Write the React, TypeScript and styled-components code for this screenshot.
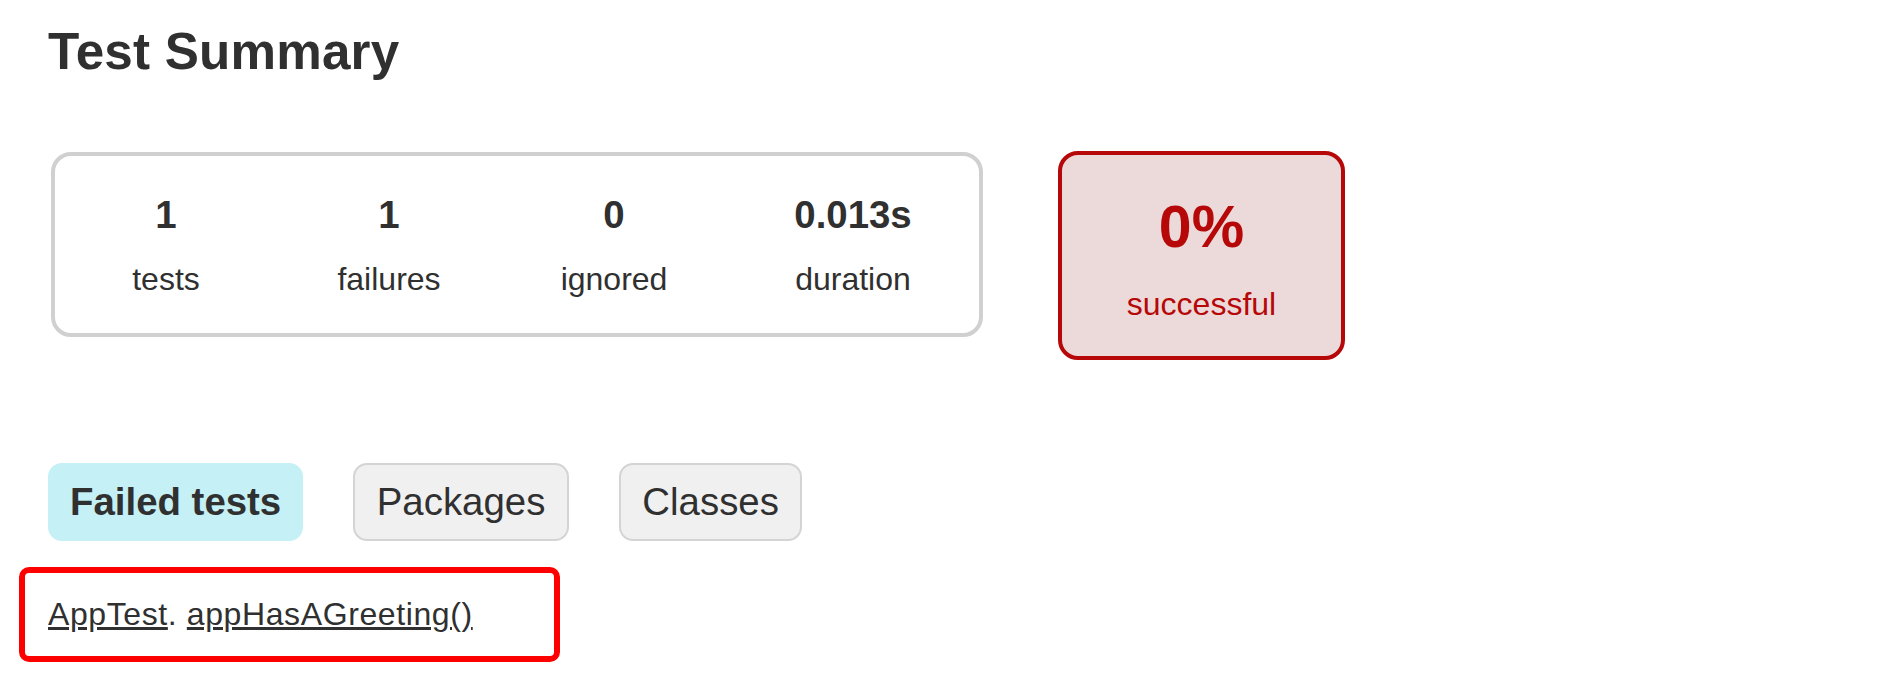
import styled, { createGlobalStyle } from "styled-components";

const GlobalStyle = createGlobalStyle`
    html, body {
        margin: 0;
        padding: 0;
        background: #ffffff;
    }
    body {
        font-family: "Liberation Sans", Arial, Helvetica, sans-serif;
        font-size: 32px;
        color: #303030;
    }
`;

const Content = styled.div`
    padding: 22px 48px 0 48px;
`;

const Title = styled.h1`
    margin: 0;
    font-size: 51.2px;
    line-height: 60px;
    font-weight: bold;
    color: #303030;
    letter-spacing: 0.2px;
`;

const SummaryRow = styled.div`
    display: flex;
    align-items: flex-start;
    margin-top: 69px;
`;

const SummaryGroup = styled.div`
    display: flex;
    width: 932px;
    box-sizing: border-box;
    margin: 1px 0 0 3px;
    border: solid 4px #d0d0d0;
    border-radius: 20px;
`;

const InfoBox = styled.div<{ $width: number }>`
    width: ${(p) => p.$width}px;
    padding: 37px 0 35px;
    text-align: center;
`;

const Counter = styled.div`
    font-size: 38.4px;
    line-height: 44px;
    font-weight: bold;
    margin-bottom: 24px;
`;

const Label = styled.p`
    margin: 0;
    font-size: 32px;
    line-height: 37px;
`;

const SuccessRate = styled.div`
    width: 287px;
    box-sizing: border-box;
    margin-left: 75px;
    padding: 38px 0 33px;
    text-align: center;
    border: solid 4px #b60808;
    border-radius: 20px;
    background-color: #ecdada;
    color: #b60808;
`;

const Percent = styled.div`
    font-size: 59px;
    line-height: 68px;
    font-weight: bold;
    margin-bottom: 25px;
`;

const TabLinks = styled.ul`
    display: flex;
    margin: 103px 0 0 0;
    padding: 0;
    list-style: none;
`;

const Tab = styled.li<{ $selected?: boolean }>`
    padding: 0 ${(p) => (p.$selected ? 20 : 21.5)}px;
    margin-right: 50px;
    border: solid 2px ${(p) => (p.$selected ? "#c5f0f5" : "#d4d4d4")};
    border-radius: 14px;
    background-color: ${(p) => (p.$selected ? "#c5f0f5" : "#f0f0f0")};
    font-size: 38.4px;
    line-height: 74px;
    font-weight: ${(p) => (p.$selected ? "bold" : "normal")};
`;

const LinkList = styled.ul`
    width: 541px;
    box-sizing: border-box;
    margin: 26px 0 0 -29px;
    padding: 23px;
    list-style: none;
    border: solid 6px #ff0000;
    border-radius: 10px;
`;

const LinkItem = styled.li`
    font-size: 32px;
    line-height: 37px;
    letter-spacing: 0.6px;
`;

const Link = styled.a`
    color: #303030;
    text-decoration: underline;
`;

const stats = [
    { value: "1", label: "tests", width: 222 },
    { value: "1", label: "failures", width: 224 },
    { value: "0", label: "ignored", width: 226 },
    { value: "0.013s", label: "duration", width: 252 },
];

export default function App() {
    return (
        <>
            <GlobalStyle />
            <Content>
                <Title>Test Summary</Title>
                <SummaryRow>
                    <SummaryGroup>
                        {stats.map((s) => (
                            <InfoBox key={s.label} $width={s.width}>
                                <Counter>{s.value}</Counter>
                                <Label>{s.label}</Label>
                            </InfoBox>
                        ))}
                    </SummaryGroup>
                    <SuccessRate>
                        <Percent>0%</Percent>
                        <Label>successful</Label>
                    </SuccessRate>
                </SummaryRow>
                <TabLinks>
                    <Tab $selected>Failed tests</Tab>
                    <Tab>Packages</Tab>
                    <Tab>Classes</Tab>
                </TabLinks>
                <LinkList>
                    <LinkItem>
                        <Link href="#">AppTest</Link>. <Link href="#">appHasAGreeting()</Link>
                    </LinkItem>
                </LinkList>
            </Content>
        </>
    );
}
